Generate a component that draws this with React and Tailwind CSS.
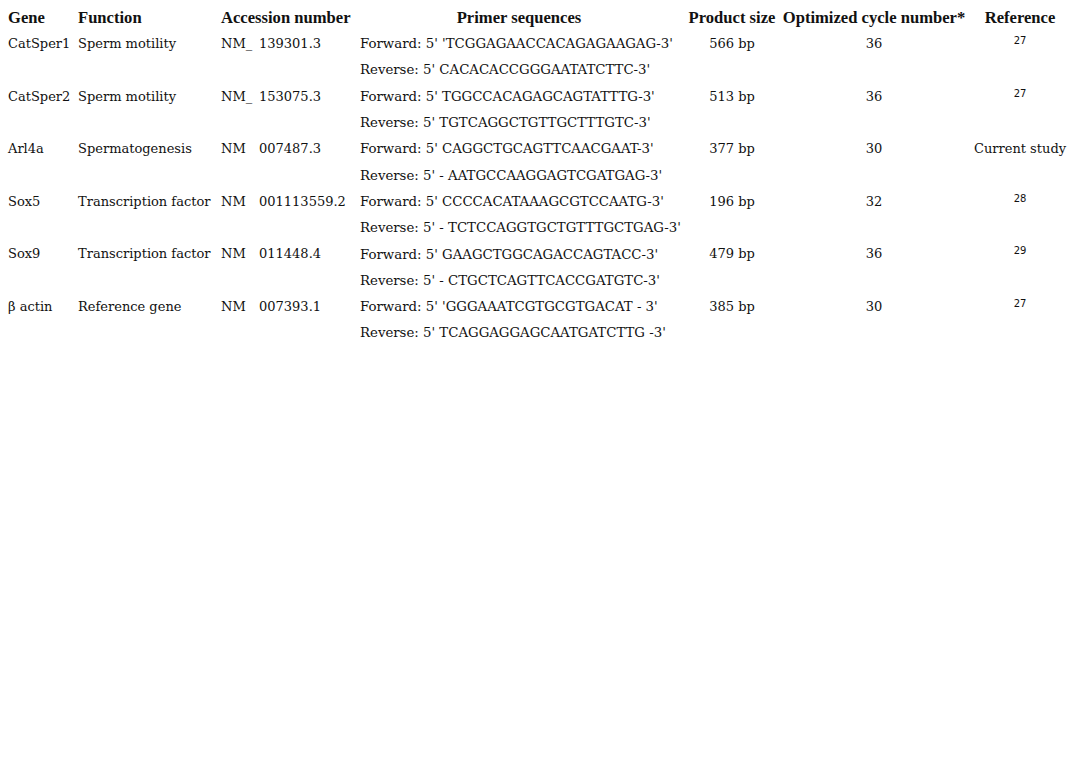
const rows = [
    {
        gene: 'CatSper1',
        fn: 'Sperm motility',
        prefix: 'NM_',
        acc: '139301.3',
        fwd: "Forward: 5' 'TCGGAGAACCACAGAGAAGAG-3'",
        rev: "Reverse: 5' CACACACCGGGAATATCTTC-3'",
        size: '566 bp',
        cycles: '36',
        ref: '27',
    },
    {
        gene: 'CatSper2',
        fn: 'Sperm motility',
        prefix: 'NM_',
        acc: '153075.3',
        fwd: "Forward: 5' TGGCCACAGAGCAGTATTTG-3'",
        rev: "Reverse: 5' TGTCAGGCTGTTGCTTTGTC-3'",
        size: '513 bp',
        cycles: '36',
        ref: '27',
    },
    {
        gene: 'Arl4a',
        fn: 'Spermatogenesis',
        prefix: 'NM',
        acc: '007487.3',
        fwd: "Forward: 5' CAGGCTGCAGTTCAACGAAT-3'",
        rev: "Reverse: 5' - AATGCCAAGGAGTCGATGAG-3'",
        size: '377 bp',
        cycles: '30',
        ref: 'Current study',
    },
    {
        gene: 'Sox5',
        fn: 'Transcription factor',
        prefix: 'NM',
        acc: '001113559.2',
        fwd: "Forward: 5' CCCCACATAAAGCGTCCAATG-3'",
        rev: "Reverse: 5' - TCTCCAGGTGCTGTTTGCTGAG-3'",
        size: '196 bp',
        cycles: '32',
        ref: '28',
    },
    {
        gene: 'Sox9',
        fn: 'Transcription factor',
        prefix: 'NM',
        acc: '011448.4',
        fwd: "Forward: 5' GAAGCTGGCAGACCAGTACC-3'",
        rev: "Reverse: 5' - CTGCTCAGTTCACCGATGTC-3'",
        size: '479 bp',
        cycles: '36',
        ref: '29',
    },
    {
        gene: 'β actin',
        fn: 'Reference gene',
        prefix: 'NM',
        acc: '007393.1',
        fwd: "Forward: 5' 'GGGAAATCGTGCGTGACAT - 3'",
        rev: "Reverse: 5' TCAGGAGGAGCAATGATCTTG -3'",
        size: '385 bp',
        cycles: '30',
        ref: '27',
    },
];

function Ref({ value }) {
    if (value.length > 2) return <span>{value}</span>;
    return <sup className="relative -top-[4px] align-baseline text-[10px] font-['DejaVu_Sans',sans-serif]">{value}</sup>;
}

export default function App() {
    return (
        <div className="min-h-[758px] bg-white pt-[5px] font-['DejaVu_Serif',serif] text-[13px] text-[#111]">
            <table className="w-[1072px] table-fixed border-collapse">
                <colgroup>
                    <col className="w-[72px]" />
                    <col className="w-[143px]" />
                    <col className="w-[139px]" />
                    <col className="w-[330px]" />
                    <col className="w-[96px]" />
                    <col className="w-[188px]" />
                    <col className="w-[104px]" />
                </colgroup>
                <thead>
                    <tr className="h-[26px] font-['Liberation_Serif',serif] text-[16.6px] font-bold">
                        <th className="pl-[8px] text-left">Gene</th>
                        <th className="pl-[6px] text-left">Function</th>
                        <th className="pl-[6px] text-left whitespace-nowrap">Accession number</th>
                        <th className="text-center">Primer sequences</th>
                        <th className="text-center whitespace-nowrap">Product size</th>
                        <th className="text-center whitespace-nowrap">Optimized cycle number*</th>
                        <th className="text-center">Reference</th>
                    </tr>
                </thead>
                <tbody>
                    {rows.map((r) => (
                        <GeneRows key={r.gene} row={r} />
                    ))}
                </tbody>
            </table>
        </div>
    );
}

function GeneRows({ row }) {
    return (
        <>
            <tr className="h-[26.3px] align-middle">
                <td rowSpan={2} className="pl-[8px] pt-[3px] align-top">{row.gene}</td>
                <td rowSpan={2} className="pl-[6px] pt-[3px] align-top whitespace-nowrap">{row.fn}</td>
                <td rowSpan={2} className="pl-[6px] pt-[3px] align-top whitespace-nowrap">
                    <span className="inline-block w-[38px]">{row.prefix}</span>
                    {row.acc}
                </td>
                <td className="pl-[6px] whitespace-nowrap text-[13.3px]">{row.fwd}</td>
                <td rowSpan={2} className="pt-[3px] text-center align-top">{row.size}</td>
                <td rowSpan={2} className="pt-[3px] text-center align-top">{row.cycles}</td>
                <td rowSpan={2} className="pt-[3px] text-center align-top whitespace-nowrap">
                    <Ref value={row.ref} />
                </td>
            </tr>
            <tr className="h-[26.3px]">
                <td className="pl-[6px] whitespace-nowrap text-[13.3px]">{row.rev}</td>
            </tr>
        </>
    );
}
